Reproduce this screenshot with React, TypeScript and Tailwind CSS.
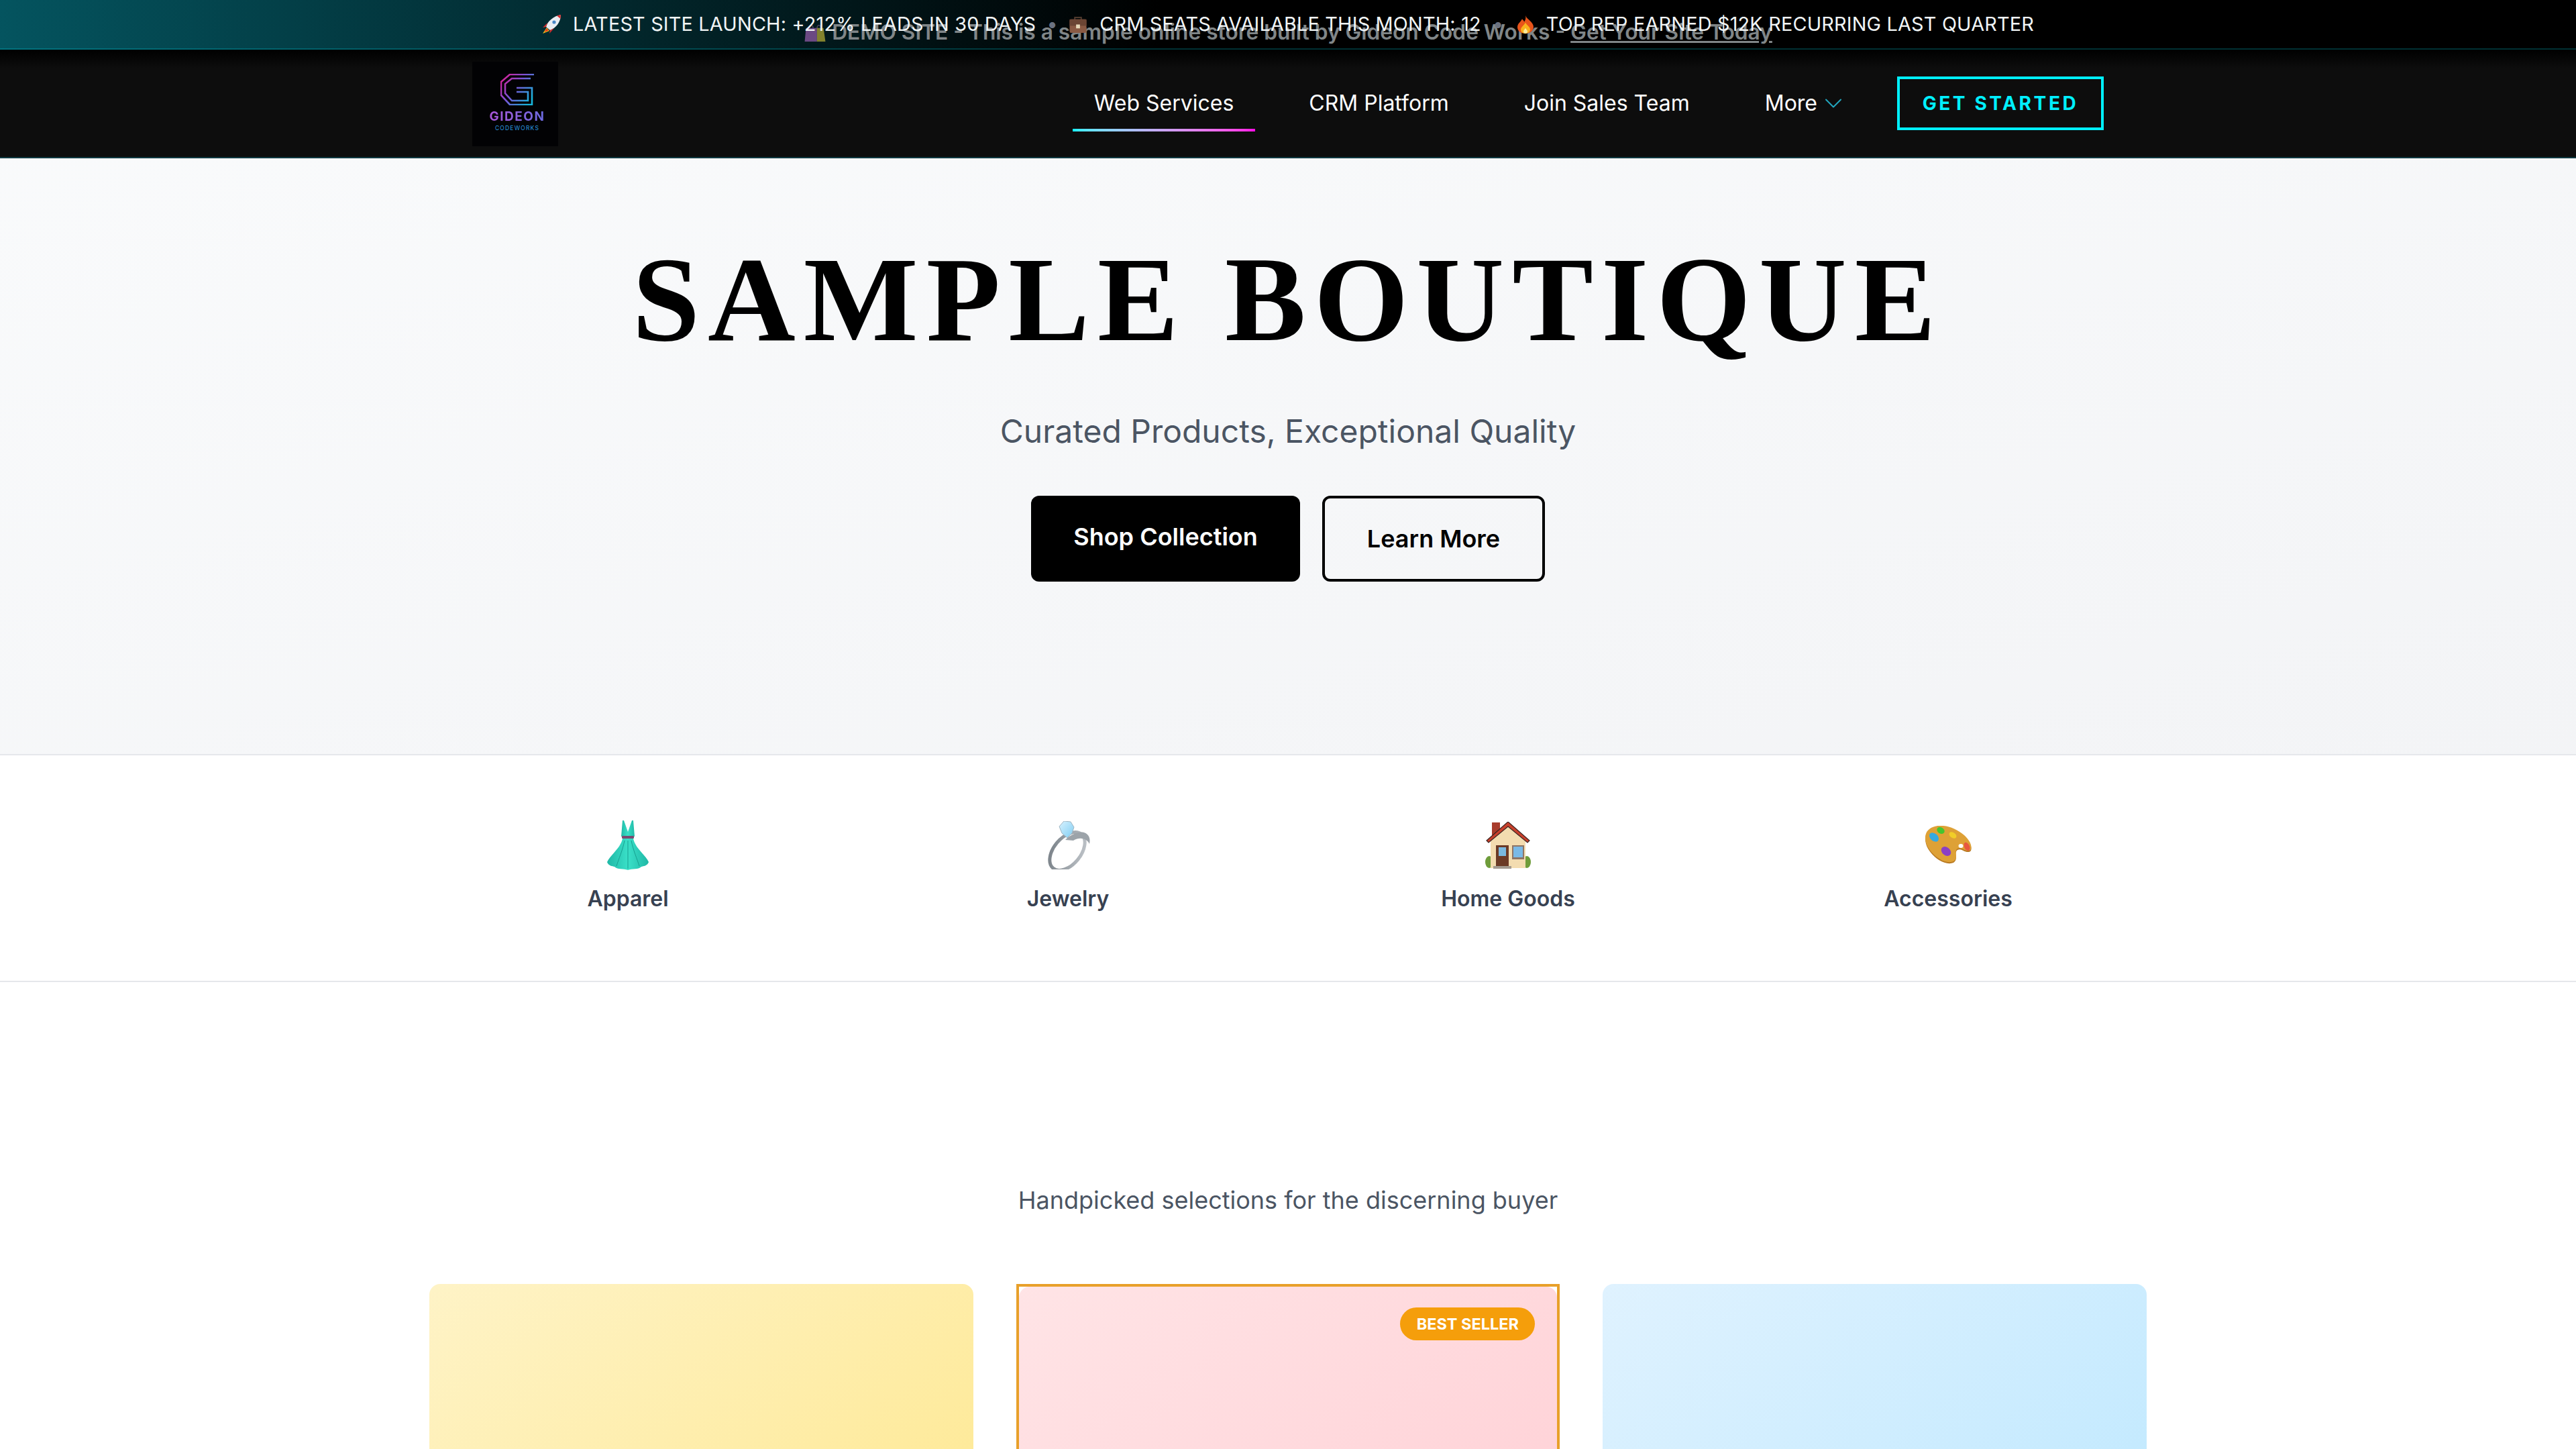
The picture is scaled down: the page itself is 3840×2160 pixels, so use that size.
import React from "react";
import { ChevronDown } from "lucide-react";

const Rocket = () => (
  <svg viewBox="0 0 30 28" className="w-[30px] h-[28px] shrink-0">
    <path d="M7 19 L1 28 L11 24 Z" fill="#f5c518" />
    <path d="M7 20 L3.5 26 L9.5 23.5 Z" fill="#e8321e" />
    <path d="M6 18 C8 10 17 2 28 0 C28 10 21 20 12 23 Z" fill="#e9edf2" />
    <path d="M22 1.5 L28 0 L27.5 6 Z" fill="#d62f2f" />
    <path d="M6 18 L1 19 L8 12 Z M12 23 L11 28 L18 20 Z" fill="#d62f2f" />
    <circle cx="18" cy="11" r="2.6" fill="#4a87c7" />
  </svg>
);

const Briefcase = () => (
  <svg viewBox="0 0 28 26" className="w-7 h-[25px] shrink-0">
    <path d="M9 6 V2 H19 V6" fill="none" stroke="#4f3a2e" strokeWidth="2" />
    <rect x="1" y="5" width="26" height="21" rx="2" fill="#8a5a44" />
    <rect x="1" y="5" width="26" height="10" fill="#6b4534" />
    <rect x="11" y="13" width="6" height="6" fill="#e6d8b8" />
  </svg>
);

const Fire = () => (
  <svg viewBox="0 0 30 36" preserveAspectRatio="none" className="w-[30px] h-[27px] shrink-0">
    <path d="M15 0 C17 8 27 13 27 23 C27 31 21 36 15 36 C8 36 3 31 3 23 C3 16 8 13 10 7 C12 10 13 11 13 13 C15 9 16 5 15 0 Z" fill="#e8541a" />
    <path d="M15 14 C16 19 22 22 22 28 C22 33 18 36 15 36 C11 36 8 33 8 28 C8 23 13 20 15 14 Z" fill="#f9b31d" />
    <path d="M15 25 C16 28 18 29 18 32 C18 35 16 36 15 36 C13 36 12 34 12 32 C12 29 14 28 15 25 Z" fill="#fdeaa0" />
  </svg>
);

const Bag = () => (
  <svg viewBox="0 0 34 28" className="w-[34px] h-[27px] shrink-0 opacity-60">
    <path d="M8 8 C8 1 14 1 14 8 M20 8 C20 1 26 1 26 8" fill="none" stroke="#7d5a80" strokeWidth="1.6" />
    <path d="M3 7 H20 V28 H1 Z" fill="#b26ac8" />
    <path d="M20 7 H30 L33 28 H20 Z" fill="#d8c93a" />
  </svg>
);

const Dress = () => (
  <svg viewBox="0 0 62 74" className="w-[62px] h-[74px]">
    <defs>
      <linearGradient id="dr" x1="0" y1="0" x2="1" y2="0">
        <stop offset="0" stopColor="#1fb8a6" />
        <stop offset="0.5" stopColor="#3ae0c8" />
        <stop offset="1" stopColor="#1fb8a6" />
      </linearGradient>
    </defs>
    <path d="M23 0 L25 0 L31 17 L37 0 L39 0 L41 24 L21 24 Z" fill="url(#dr)" />
    <rect x="22" y="23" width="18" height="4" rx="1" fill="#7a4a70" />
    <path d="M23 27 H39 C42 42 58 52 62 62 C60 68 54 68 51 69 C46 74 38 71 31 74 C24 71 16 74 11 69 C8 68 2 68 0 62 C4 52 20 42 23 27 Z" fill="url(#dr)" />
    <path d="M26 30 C23 45 17 58 14 68 M31 30 V72 M36 30 C39 45 45 58 48 68" stroke="#17a090" strokeWidth="1" fill="none" />
  </svg>
);

const Ring = () => (
  <svg viewBox="0 0 68 72" className="w-[68px] h-[72px]">
    <defs>
      <linearGradient id="rg" x1="1" y1="0" x2="0" y2="1">
        <stop offset="0" stopColor="#c4c9ce" />
        <stop offset="1" stopColor="#737b82" />
      </linearGradient>
      <linearGradient id="gm" x1="0" y1="0" x2="1" y2="1">
        <stop offset="0" stopColor="#d8f2ff" />
        <stop offset="1" stopColor="#7fcdf2" />
      </linearGradient>
    </defs>
    <ellipse cx="33" cy="45" rx="20" ry="33" transform="rotate(40 33 45)" fill="none" stroke="url(#rg)" strokeWidth="5" />
    <path d="M30 28 C38 20 50 15 58 17 C65 19 68 26 66 34 C62 26 52 23 42 29 Z" fill="#9ca3a9" />
    <path d="M28 0 L38 1 L43 9 L40 18 L33 25 L25 18 L21 8 Z" fill="url(#gm)" stroke="#9fb5c2" strokeWidth="1" />
  </svg>
);

const House = () => (
  <svg viewBox="0 0 70 70" className="w-[70px] h-[70px]">
    <ellipse cx="7" cy="60" rx="6" ry="9" fill="#6f9c3a" />
    <ellipse cx="63" cy="60" rx="6" ry="9" fill="#6f9c3a" />
    <rect x="11" y="1" width="12" height="26" fill="#a83c2c" />
    <path d="M9 27 L35 4 L61 27 V69 H9 Z" fill="#f3dcb0" />
    <path d="M3 28 L35 0 L67 28 L64 31 L35 7 L6 31 Z" fill="#c8402c" stroke="#3b2320" strokeWidth="1.2" />
    <rect x="17" y="35" width="19" height="33" fill="#6b3a26" />
    <rect x="21" y="38" width="11" height="13" fill="#7ab9df" />
    <rect x="41" y="35" width="18" height="21" fill="#8f7565" />
    <rect x="43" y="37" width="14" height="16" fill="#7ab9e6" />
    <rect x="13" y="66" width="27" height="4" fill="#a39a90" />
  </svg>
);

const Palette = () => (
  <svg viewBox="0 0 72 58" className="w-[72px] h-[58px]">
    <path d="M8 7 C20 -3 44 2 60 16 C72 27 73 38 67 39 C60 40 56 33 50 36 C44 40 52 50 44 55 C32 60 14 48 6 34 C0 23 1 12 8 7 Z" fill="#b97a22" />
    <path d="M8 5 C20 -5 44 0 60 14 C72 25 73 36 67 37 C60 38 56 31 50 34 C44 38 52 48 44 53 C32 58 14 46 6 32 C0 21 1 10 8 5 Z" fill="#dea136" />
    <ellipse cx="55" cy="30" rx="3.5" ry="3" fill="#fff" />
    <ellipse cx="15" cy="17" rx="8" ry="5.5" transform="rotate(40 15 17)" fill="#36a9e0" />
    <ellipse cx="25" cy="7" rx="6" ry="4.5" transform="rotate(30 25 7)" fill="#45c52e" />
    <ellipse cx="43" cy="14" rx="6" ry="4" transform="rotate(35 43 14)" fill="#f1cd28" />
    <ellipse cx="33" cy="38" rx="8" ry="6" transform="rotate(40 33 38)" fill="#8b3fc4" />
    <ellipse cx="64" cy="31" rx="4" ry="6.5" transform="rotate(-25 64 31)" fill="#e8573f" />
  </svg>
);

const Logo = () => (
  <div className="mt-[2px] w-32 h-[126px] bg-[#020204] flex flex-col items-center pt-[18px] pl-[6px]">
    <svg viewBox="0 0 50 47" className="w-[50px] h-[47px]">
      <defs>
        <linearGradient id="lg" x1="0" y1="0" x2="1" y2="0.7">
          <stop offset="0" stopColor="#e3188f" />
          <stop offset="0.5" stopColor="#7a54d8" />
          <stop offset="1" stopColor="#18b6dc" />
        </linearGradient>
      </defs>
      <path d="M50 1 H14 L1 12 V32 L14 46 H47 V21 H24 M45 7 H17 L7 15 V29 L17 40 H41 V27 H24" fill="none" stroke="url(#lg)" strokeWidth="2.6" />
    </svg>
    <div className="text-[19px] leading-[19px] mt-[7px] font-bold tracking-[1.5px] bg-linear-to-r from-[#a855d8] to-[#6a6ae0] bg-clip-text text-transparent font-['Inter',sans-serif]">GIDEON</div>
    <div className="text-[8.5px] leading-[9px] mt-[4px] tracking-[1.2px] text-[#2a9ae0] font-['Inter',sans-serif]">CODEWORKS</div>
  </div>
);

const categories = [
  { label: "Apparel", icon: <Dress /> },
  { label: "Jewelry", icon: <Ring /> },
  { label: "Home Goods", icon: <House /> },
  { label: "Accessories", icon: <Palette /> },
];

export default function App() {
  return (
    <div className="h-screen overflow-hidden bg-white font-['Inter',sans-serif]">
      <div className="relative h-[74px] border-b-2 border-[#00f0ff33] bg-[linear-gradient(90deg,#04545f_0%,#000_45%,#000_100%)]">
        <div className="absolute inset-x-0 top-[29px] flex justify-center items-center gap-[8px] text-[31.7px] leading-[38px] font-semibold text-[#808688] whitespace-nowrap">
          <Bag />
          <span>
            DEMO SITE - This is a sample online store built by Gideon Code Works - <span className="underline">Get Your Site Today</span>
          </span>
        </div>
        <div className="relative flex h-[72px] items-center justify-center text-[28.8px] text-[#f1f5f6] whitespace-nowrap tracking-[0.2px]">
          <Rocket />
          <span className="ml-[16px]">LATEST SITE LAUNCH: +212% LEADS IN 30 DAYS</span>
          <span className="w-[49px] text-center text-[#6b7280]">•</span>
          <Briefcase />
          <span className="ml-[18px]">CRM SEATS AVAILABLE THIS MONTH: 12</span>
          <span className="w-[51px] text-center text-[#6b7280]">•</span>
          <Fire />
          <span className="ml-[16px]">TOP REP EARNED $12K RECURRING LAST QUARTER</span>
        </div>
      </div>

      <nav className="h-[162px] border-b-2 border-[#103a42] bg-[linear-gradient(180deg,#000_0px,#0d0d0d_28px,#0d0d0d_100%)]">
        <div className="mx-auto flex h-40 max-w-[2560px] items-center justify-between px-16">
          <Logo />
          <div className="flex items-center gap-12 text-[32px] text-white">
            <a className="relative px-8 py-4">
              Web Services
              <span className="absolute inset-x-0 bottom-[-2px] h-1 bg-linear-to-r from-[#00f0ff] to-[#ff00e6]" />
            </a>
            <a className="px-8 py-4">CRM Platform</a>
            <a className="px-8 py-4">Join Sales Team</a>
            <a className="flex items-center pl-8 pr-[25px]">
              More
              <ChevronDown className="ml-[2px] w-11 h-11 text-[#22a8c0]" strokeWidth={1.1} />
            </a>
            <a className="flex h-20 w-[308px] items-center justify-center border-4 border-[#00f0ff] text-[28px] font-bold tracking-[3.6px] text-[#00f0ff]">
              GET STARTED
            </a>
          </div>
        </div>
      </nav>

      <section className="h-[890px] border-b-2 border-[#e5e7eb] bg-linear-to-br from-gray-50 to-gray-100 pt-[115px] text-center">
        <h1 className="text-[181px] leading-[190px] font-bold tracking-[12px] text-black font-['Liberation_Serif',serif]">SAMPLE BOUTIQUE</h1>
        <p className="mt-[70px] text-[48px] leading-[64px] text-[#4b5563]">Curated Products, Exceptional Quality</p>
        <div className="mt-[64px] flex justify-center gap-[33px]">
          <a className="flex h-32 w-[401px] justify-center rounded-xl bg-black pt-[36px] text-[36px] leading-[50px] font-semibold text-white">Shop Collection</a>
          <a className="flex h-32 w-[332px] items-center justify-center rounded-xl border-4 border-black text-[36px] font-semibold text-black">Learn More</a>
        </div>
      </section>

      <section className="h-[338px] border-b-2 border-[#e5e7eb] bg-white pt-[96px]">
        <div className="mx-auto grid max-w-[2560px] grid-cols-4 gap-16">
          {categories.map((c) => (
            <div key={c.label} className="flex flex-col items-center">
              <div className="flex h-[76px] items-center justify-center">{c.icon}</div>
              <div className="mt-[20px] text-[32px] leading-[44px] font-semibold text-[#374151]">{c.label}</div>
            </div>
          ))}
        </div>
      </section>

      <section className="bg-white pt-[300px]">
        <p className="text-center text-[36px] leading-[50px] text-[#4b5563]">Handpicked selections for the discerning buyer</p>
        <div className="mx-auto mt-[100px] grid max-w-[2560px] grid-cols-3 gap-16">
          <div className="h-[640px] rounded-2xl bg-linear-to-br from-amber-100 to-amber-200" />
          <div className="relative border-4 border-[#e8a02a] bg-white">
            <div className="h-[640px] rounded-2xl bg-linear-to-br from-rose-100 to-rose-200" />
            <span className="absolute right-[33px] top-[31px] flex h-[49px] w-[201px] items-center justify-center rounded-full bg-[#f59e0b] text-[23.5px] font-bold text-white">BEST SELLER</span>
          </div>
          <div className="h-[640px] rounded-2xl bg-linear-to-br from-sky-100 to-sky-200" />
        </div>
      </section>
    </div>
  );
}
